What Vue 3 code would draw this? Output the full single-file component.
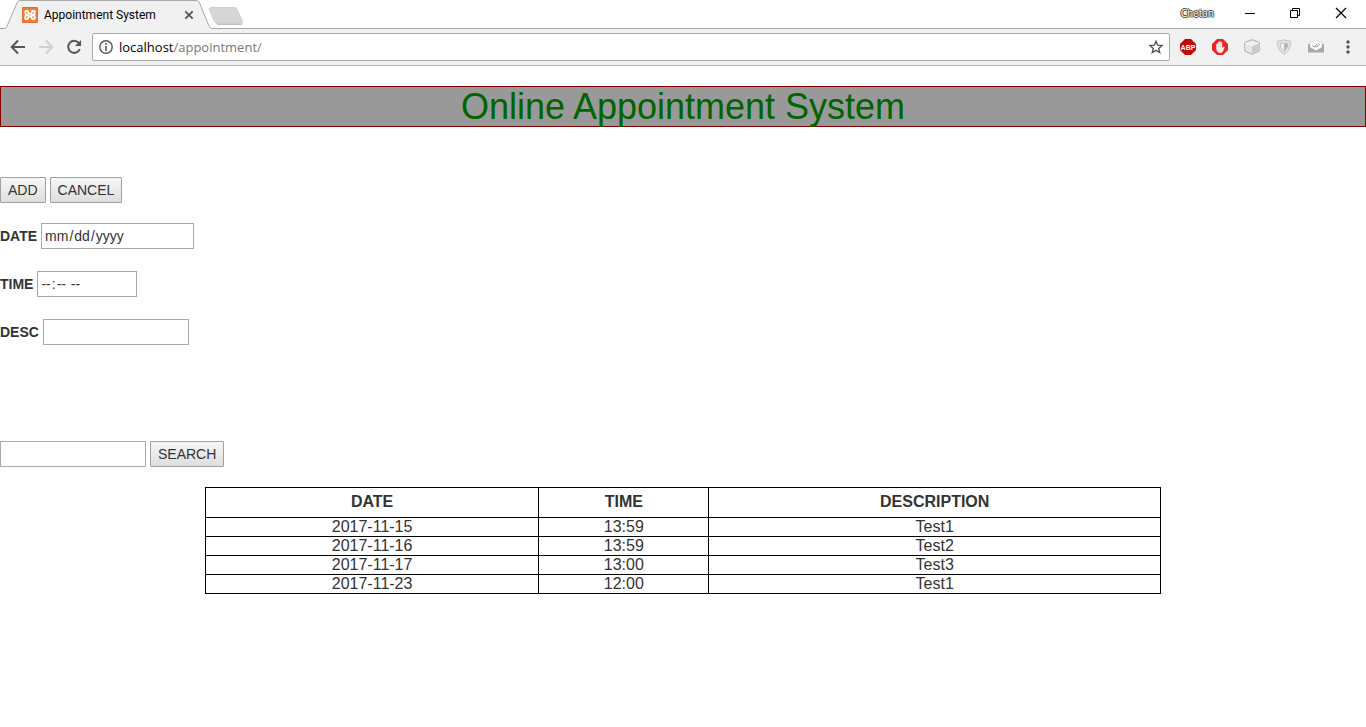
<script setup>
import { ref } from 'vue'

const date = ref('')
const time = ref('')
const desc = ref('')
const query = ref('')
const appointments = [
  { date: '2017-11-15', time: '13:59', description: 'Test1' },
  { date: '2017-11-16', time: '13:59', description: 'Test2' },
  { date: '2017-11-17', time: '13:00', description: 'Test3' },
  { date: '2017-11-23', time: '12:00', description: 'Test1' },
]
</script>

<template>
  <div class="browser">
    <header class="chrome">
      <div class="strip">
        <svg class="tab-shape" width="246" height="29" viewBox="0 0 246 29" aria-hidden="true">
          <path d="M0 29V28.500H4C6 28.500 6.500 27.500 7 26L17 3C18 1 18.500 0.500 20 0.500H196C198 0.500 198.500 1 199.500 3L209 26C210 28 210.500 28.500 213 28.500V29Z" fill="#f1f1f1" />
          <path d="M0 28.500H4C6 28.500 6.500 27.500 7 26L17 3C18 1 18.500 0.500 20 0.500H196C198 0.500 198.500 1 199.500 3L209 26C210 28 210.500 28.500 213 28.500H246" fill="none" stroke="#a9a9a9" />
          <path d="M7.500 28.500H209.500" stroke="#f1f1f1" />
          <path d="M211 7.500H234C236 7.500 236.500 8 237.500 10L242.500 21.500C243 23 242.500 23.500 241 23.500H218C216 23.500 215.500 23 214.500 21.500L209.500 10C209 8.500 209.500 7.500 211 7.500Z" fill="#d6d6d6" stroke="#cfcfcf" />
          <path d="M217 24.500H242" stroke="#c2c2c2" />
        </svg>
        <div class="tab">
          <svg width="16" height="16" viewBox="0 0 16 16" aria-hidden="true">
            <rect width="16" height="16" rx="1" fill="#e0702a" />
            <rect x="1" y="1" width="14" height="14" fill="#f07c30" />
            <path d="M6.200 6.300V5.300Q6.200 3.800 4.700 3.800Q3.200 3.800 3.200 5.500Q3.200 7.500 4.800 8Q3.200 8.500 3.200 10.500Q3.200 12.200 4.700 12.200Q6.200 12.200 6.200 10.700V9.700M9.800 6.300V5.300Q9.800 3.800 11.300 3.800Q12.800 3.800 12.800 5.500Q12.800 7.500 11.200 8Q12.800 8.500 12.800 10.500Q12.800 12.200 11.300 12.200Q9.800 12.200 9.800 10.700V9.700M5.800 6.500H10.200M5.800 9.500H10.200" fill="none" stroke="#fff" stroke-width="1.900" />
          </svg>
          <span class="tab-title">Appointment System</span>
          <button class="icon" aria-label="Close tab">
            <svg width="10" height="10" viewBox="0 0 10 10"><path d="M1.300 1.300L8.700 8.700M8.700 1.300L1.300 8.700" stroke="#555" stroke-width="1.800" /></svg>
          </button>
        </div>
        <div class="window">
          <span class="user">Chetan</span>
          <button class="icon" aria-label="Minimize"><svg width="12" height="12" viewBox="0 0 12 12"><path d="M2 6.500H12" stroke="#000" /></svg></button>
          <button class="icon" aria-label="Restore"><svg width="12" height="12" viewBox="0 0 12 12"><path d="M1.500 3.500H8.500V10.500H1.500ZM3.500 3.500V1.500H10.500V8.500H8.500" fill="none" stroke="#000" /></svg></button>
          <button class="icon" aria-label="Close"><svg width="12" height="12" viewBox="0 0 12 12"><path d="M1 1L11 11M11 1L1 11" stroke="#000" stroke-width="1.200" /></svg></button>
        </div>
      </div>
      <div class="toolbar">
        <nav class="nav">
          <button class="icon" aria-label="Back"><svg width="16" height="16" viewBox="0 0 16 16"><path d="M15 8H2M8 1.500L1.700 8L8 14.500" fill="none" stroke="#555" stroke-width="2" /></svg></button>
          <button class="icon" aria-label="Forward"><svg width="16" height="16" viewBox="0 0 16 16"><path d="M1 8H14M8 1.500L14.300 8L8 14.500" fill="none" stroke="#d0d0d0" stroke-width="2" /></svg></button>
          <button class="icon" aria-label="Reload"><svg width="16" height="16" viewBox="0 0 16 16"><path d="M12.800 4A6 6 0 1 0 13.800 10" fill="none" stroke="#555" stroke-width="2" /><path d="M15 1V7H9Z" fill="#555" /></svg></button>
        </nav>
        <div class="address">
          <svg width="14" height="14" viewBox="0 0 14 14" aria-hidden="true"><circle cx="7" cy="7" r="6.200" fill="none" stroke="#555" stroke-width="1.400" /><path d="M7 6V11M7 3V4.700" stroke="#555" stroke-width="1.600" /></svg>
          <span class="url">localhost<span class="path">/appointment/</span></span>
          <button class="icon" aria-label="Bookmark this page"><svg width="16" height="16" viewBox="0 0 16 16"><path d="M8 2.200L9.700 6.200L14 6.600L10.700 9.400L11.700 13.600L8 11.400L4.300 13.600L5.300 9.400L2 6.600L6.300 6.200Z" fill="none" stroke="#555" stroke-width="1.400" /></svg></button>
        </div>
        <div class="extensions">
          <button class="icon" aria-label="Adblock Plus">
            <svg width="16" height="16" viewBox="0 0 16 16"><path d="M5 0H11L16 5V11L11 16H5L0 11V5Z" fill="#c40808" /><text x="8" y="10.500" text-anchor="middle" class="abp">ABP</text></svg>
          </button>
          <button class="icon" aria-label="AdBlock">
            <svg width="16" height="16" viewBox="0 0 16 16"><path d="M5 0H11L16 5V11L11 16H5L0 11V5Z" fill="#ec2524" /><path d="M4.300 9.500V5Q5 4 5.800 5V3.200Q6.500 2.200 7.200 3.200V2.500Q8 1.500 8.700 2.500V3.500Q9.500 2.500 10.200 3.500V9L11.500 7.500Q13 7.200 12.600 8.700L10.500 13.300Q8 14.500 6 13.300Q4.300 12 4.300 9.500Z" fill="#f6eeee" /><path d="M5.900 5V8M7.300 4V8M8.800 4V8" stroke="#e8b5b5" stroke-width="0.500" /></svg>
          </button>
          <button class="icon" aria-label="Cube">
            <svg width="16" height="16" viewBox="0 0 16 16"><path d="M8 0.700L15.200 3.500V12L8 15.300L0.800 12V3.500Z" fill="#eee" stroke="#a8a8a8" /><path d="M1.500 4.200L8 7V14.500L1.500 11.600Z" fill="#e6e6e6" /><path d="M8 7L14.500 4.200V11.600L8 14.500Z" fill="#cbcbcb" /><path d="M1.500 4L8 6.800L14.500 4" fill="none" stroke="#fff" stroke-width="0.700" /></svg>
          </button>
          <button class="icon" aria-label="Shield">
            <svg width="16" height="16" viewBox="0 0 16 16"><path d="M8 0.800Q11 2.200 14.700 2.200Q15 11 8 15.200Q1 11 1.300 2.200Q5 2.200 8 0.800Z" fill="#e6e6e6" stroke="#c2c2c2" /><path d="M8 3.800Q9.800 4.600 12 4.600Q12 9.500 8 12.300Q4 9.500 4 4.600Q6.200 4.600 8 3.800Z" fill="#f2f2f2" stroke="#c2c2c2" /><path d="M8 4Q9.800 4.800 12 4.800Q12 9.500 8 12.200Z" fill="#b8b8b8" /></svg>
          </button>
          <button class="icon" aria-label="Mail tracker">
            <svg width="16" height="16" viewBox="0 0 16 16"><path d="M0 5.500L2 4V8L8 11L14 8V4L16 5.500V13.500H0Z" fill="#a8a8a8" /><path d="M2 3.500L8 1L14 3.500V8L8 11.500L2 8Z" fill="#fdfdfd" stroke="#d2d2d2" stroke-width="0.500" /><path d="M4.500 6.500L6.200 8.200L9 5.200M7.700 7.500L8.500 8.200L11.500 5" fill="none" stroke="#888" /></svg>
          </button>
          <button class="icon" aria-label="Menu"><svg width="16" height="16" viewBox="0 0 16 16" fill="#555"><circle cx="8" cy="3" r="1.700" /><circle cx="8" cy="8" r="1.700" /><circle cx="8" cy="13" r="1.700" /></svg></button>
        </div>
      </div>
    </header>

    <main>
      <h1>Online Appointment System</h1>
      <form class="entry" @submit.prevent>
        <div class="row">
          <button class="action" type="submit">ADD</button>
          <button class="action" type="reset">CANCEL</button>
        </div>
        <div class="row date-row"><label for="date">DATE</label><input id="date" v-model="date" class="date" type="date" /></div>
        <div class="row"><label for="time">TIME</label><input id="time" v-model="time" class="time" type="time" /></div>
        <div class="row"><label for="desc">DESC</label><input id="desc" v-model="desc" class="text" type="text" /></div>
      </form>
      <form class="row search" @submit.prevent>
        <input v-model="query" class="text" type="text" aria-label="Search appointments" />
        <button class="action" type="submit">SEARCH</button>
      </form>
      <table>
        <colgroup><col class="col-date" /><col class="col-time" /><col /></colgroup>
        <thead>
          <tr><th>DATE</th><th>TIME</th><th>DESCRIPTION</th></tr>
        </thead>
        <tbody>
          <tr v-for="item in appointments" :key="item.date">
            <td>{{ item.date }}</td><td>{{ item.time }}</td><td>{{ item.description }}</td>
          </tr>
        </tbody>
      </table>
    </main>
  </div>
</template>

<style>
body {
  margin: 0;
  background: #fff;
}
</style>

<style scoped>
* {
  box-sizing: border-box;
}
.browser {
  font-family: "Liberation Sans", Arial, sans-serif;
  font-size: 14px;
  color: #333;
}
svg {
  display: block;
}
.icon {
  padding: 0;
  border: 0;
  background: none;
}
.chrome {
  font-family: "Open Sans", "Noto Sans", sans-serif;
}
.strip {
  position: relative;
  display: flex;
  justify-content: space-between;
  height: 29px;
  border-bottom: 1px solid #a9a9a9;
}
.tab-shape {
  position: absolute;
  top: 0;
  left: 0;
}
.tab {
  position: relative;
  display: flex;
  align-items: center;
  width: 194px;
  padding: 2px 0 0 22px;
}
.tab-title {
  flex: 1;
  margin-left: 6px;
  font-family: Roboto, "Open Sans", sans-serif;
  font-size: 12px;
  color: #000;
  white-space: nowrap;
}
.window {
  display: flex;
  align-items: center;
  gap: 34px;
  padding: 0 19px 2px 0;
}
.user {
  margin-right: -5px;
  font-size: 10px;
  color: #fff;
  text-shadow: 1px 0 #444, -1px 0 #444, 0 1px #444, 0 -1px #444, 0 0 2px #444;
}
.toolbar {
  display: flex;
  align-items: center;
  height: 37px;
  padding: 0 10px;
  gap: 10px;
  background: #f1f1f1;
  border-bottom: 1px solid #b6b6b6;
}
.nav {
  display: flex;
  gap: 12px;
}
.address {
  flex: 1;
  display: flex;
  align-items: center;
  gap: 6px;
  height: 28px;
  padding: 0 5px 0 6px;
  background: #fff;
  border: 1px solid #a9a9a9;
  border-radius: 2px;
}
.url {
  flex: 1;
  font-size: 13px;
  color: #000;
}
.path {
  color: #777;
}
.extensions {
  display: flex;
  gap: 16px;
}
.abp {
  font: bold 7px "Liberation Sans", Arial, sans-serif;
  fill: #fff;
}
h1 {
  margin: 20px 0 50px;
  border: 1px solid #800000;
  background: #999;
  color: #006400;
  font-size: 36px;
  font-weight: 400;
  line-height: 39px;
  text-align: center;
}
.entry {
  display: flex;
  flex-direction: column;
  gap: 22px;
}
.row {
  display: flex;
  align-items: center;
  gap: 4px;
  height: 26px;
}
.date-row {
  margin-top: -2px;
}
label {
  font-weight: 700;
}
input {
  height: 26px;
  padding: 1px 2px;
  border: 1px solid #a9a9a9;
  background: #fff;
  color: #333;
  font: 14px "Liberation Sans", Arial, sans-serif;
}
input::-webkit-calendar-picker-indicator {
  display: none;
}
.date {
  width: 153px;
}
.time {
  width: 100px;
}
.text {
  width: 146px;
}
.action {
  height: 26px;
  padding: 0 7px;
  border: 1px solid #a0a0a0;
  border-radius: 1px;
  background: linear-gradient(#f6f6f6, #dedede);
  color: #333;
  font: 14px "Liberation Sans", Arial, sans-serif;
}
.search {
  margin: 96px 0 20px;
}
table {
  width: 70%;
  margin: 0 auto;
  border-collapse: collapse;
  table-layout: fixed;
  font-size: 16px;
  line-height: 18px;
  text-align: center;
}
.col-date {
  width: 34.900%;
}
.col-time {
  width: 17.800%;
}
th,
td {
  padding: 0;
  border: 1px solid #000;
}
th {
  height: 30px;
  padding-bottom: 2px;
}
</style>
